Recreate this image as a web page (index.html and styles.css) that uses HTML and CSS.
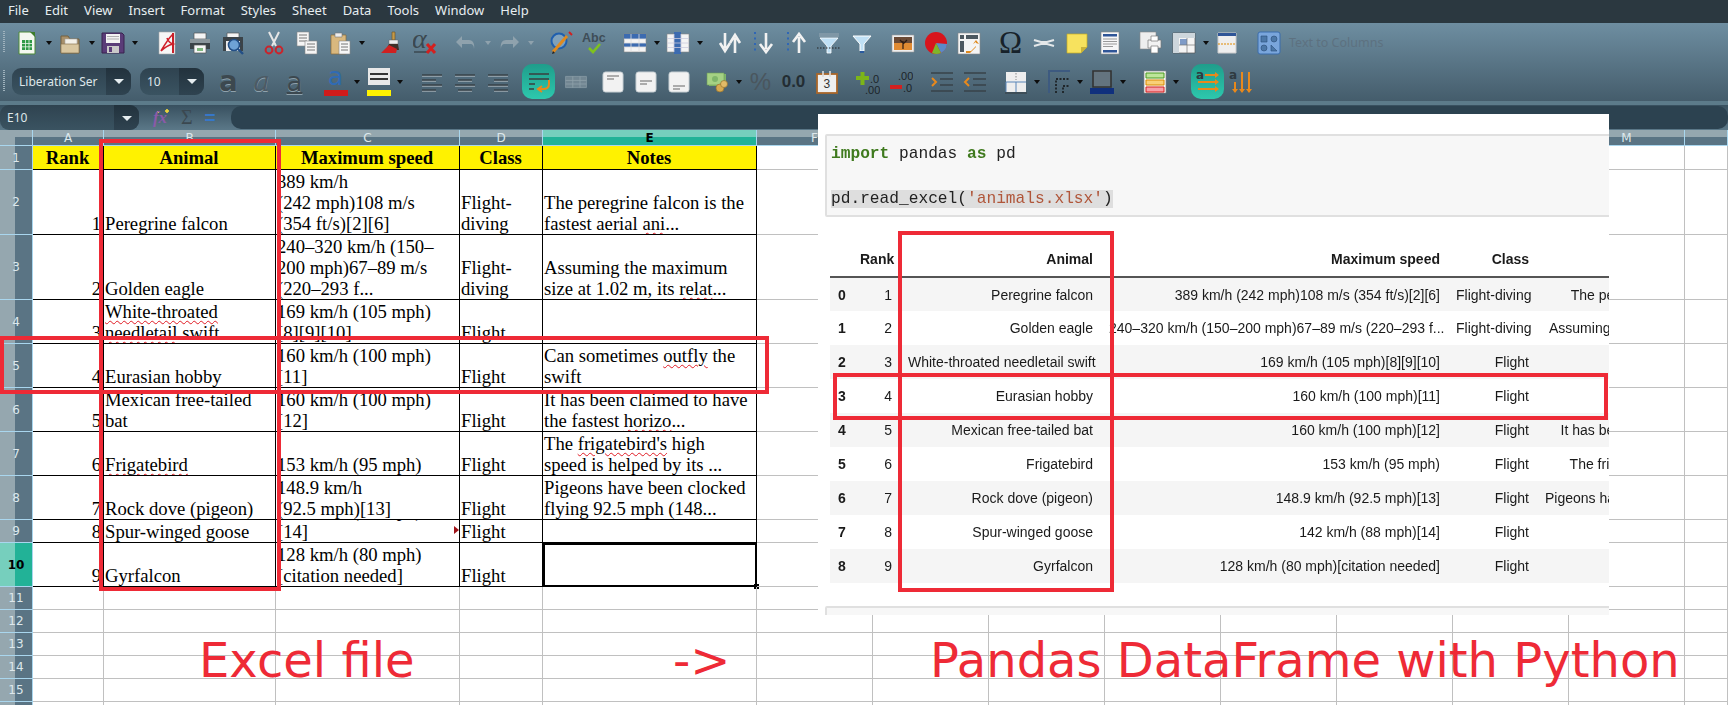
FILE: index.html
```html
<!DOCTYPE html>
<html lang="en">

<head>
  <meta charset="UTF-8">
  <title>Excel file to Pandas DataFrame</title>
  <link rel="stylesheet" href="styles.css">
</head>

<body>
  <div class="menubar">
    <span>File</span><span>Edit</span><span>View</span><span>Insert</span><span>Format</span><span>Styles</span><span>Sheet</span><span>Data</span><span>Tools</span><span>Window</span><span>Help</span>
  </div>

  <div class="toolbars">
    <!-- standard toolbar -->
    <div class="toolrow row-std">
      <div class="group">
        <span class="tool"><svg viewBox="0 0 24 24"><path d="M4 1h12l4 4v18H4z" fill="#f4f8f0" stroke="#4c8a38"/><path d="M15 1h5v5z" fill="#3d7d2c"/><path d="M7 9h10v10H7z" fill="#2f9a45"/><path d="M7 12.500h10M7 15.800h10M10.500 9v10M14 9v10" stroke="#e8f5e8" stroke-width=".8"/></svg></span><span class="drop"></span>
        <span class="tool"><svg viewBox="0 0 24 24"><path d="M3 5h7l2 3h9v14H3z" fill="#a8906a" stroke="#75613f"/><path d="M7 8h12v7H7z" fill="#f4f1e8" stroke="#aaa" stroke-width=".6"/><path d="M3 13h18v9H3z" fill="#d9c7a0" stroke="#8a7650" stroke-width=".7"/></svg></span><span class="drop"></span>
        <span class="tool"><svg viewBox="0 0 24 24"><path d="M1 2h20l2 2v18H1z" fill="#5a3c78" stroke="#38224f"/><path d="M5 3h14v9H5z" fill="#f2f2f2"/><path d="M6 5.500h12M6 8h12" stroke="#b0b0b0"/><path d="M6 15h12v7H6z" fill="#c9c9c9"/><path d="M8 16h3v5H8z" fill="#5a3c78"/></svg></span><span class="drop"></span>
      </div>
      <div class="group push-2">
        <span class="tool"><svg viewBox="0 0 24 24"><path d="M4 1h16v22H4z" fill="#f7f7f7" stroke="#aaa" stroke-width=".6"/><path d="M18 3c-5 5-8 10-12 17 4-4 8-6 12-7-3-1-5-3-6-6" fill="none" stroke="#d0202a" stroke-width="1.600"/><path d="M17 2h2v20h-2z" fill="#c9202a"/></svg></span>
        <span class="tool"><svg viewBox="0 0 24 24"><path d="M6 2h12v6H6z" fill="#f4f4f4" stroke="#555" stroke-width=".7"/><path d="M2 8h20v10H2z" fill="#3b4348"/><path d="M2 8h20v4H2z" fill="#8b969c"/><path d="M6 14h12v8H6z" fill="#f6f6f6" stroke="#555" stroke-width=".7"/><path d="M9 17h6v3H9z" fill="#7fb77e"/></svg></span>
        <span class="tool"><svg viewBox="0 0 24 24"><path d="M6 2h12v5H6z" fill="#f4f4f4" stroke="#555" stroke-width=".7"/><path d="M2 6h20v14H2z" fill="#3b4348"/><path d="M5 10h14v10H5z" fill="#eee"/><circle cx="13" cy="14" r="5.500" fill="#6ea2d6" stroke="#234f86" stroke-width="1.600"/><path d="M17 18l5 5" stroke="#234f86" stroke-width="2.400"/></svg></span>
      </div>
      <div class="group">
        <span class="tool"><svg viewBox="0 0 24 24"><path d="M7 1l7 14M17 1l-7 14" stroke="#e6e6e6" stroke-width="2"/><circle cx="7" cy="19" r="3.400" fill="none" stroke="#c9252c" stroke-width="2"/><circle cx="17" cy="19" r="3.400" fill="none" stroke="#c9252c" stroke-width="2"/></svg></span>
        <span class="tool"><svg viewBox="0 0 24 24"><path d="M2 1h12v14H2z" fill="#f5f5f5" stroke="#888" stroke-width=".6"/><path d="M4 4h8M4 7h8M4 10h8" stroke="#777"/><path d="M10 10h12v13H10z" fill="#f5f5f5" stroke="#888" stroke-width=".6"/><path d="M12 13h8M12 16h8M12 19h8" stroke="#777"/></svg></span>
        <span class="tool"><svg viewBox="0 0 24 24"><path d="M3 4h15v19H3z" fill="#d9b87e" stroke="#8a6c3a" stroke-width=".7"/><path d="M7 2h7v4H7z" fill="#eee" stroke="#777" stroke-width=".6"/><path d="M11 10h11v13H11z" fill="#f7f7f7" stroke="#888" stroke-width=".6"/><path d="M13 13h7M13 16h7M13 19h7" stroke="#777"/></svg></span><span class="drop"></span>
      </div>
      <div class="group">
        <span class="tool"><svg viewBox="0 0 24 24"><path d="M12 1h3v8h-3z" fill="#c49a4a" stroke="#6b4f1d" stroke-width=".6"/><path d="M9 9h9v4H9z" fill="#eee" stroke="#666" stroke-width=".5"/><path d="M9 13h9l1 6H6z" fill="#3f3028"/><path d="M1 22l8-8 8 4-1 4z" fill="#cf2020"/></svg></span>
        <span class="tool"><svg viewBox="0 0 24 24"><text x="-1" y="17" class="ico-italic">α</text><path d="M1 21h13" stroke="#3b4850" stroke-width="1.500"/><path d="M14 13l8 9M22 13l-8 9" stroke="#d4201f" stroke-width="3"/></svg></span>
      </div>
      <div class="group dim">
        <span class="tool"><svg viewBox="0 0 24 24"><path d="M8 5L2 11l6 6v-4h8c3 0 4 2 4 5 1-5-1-9-5-9H8z" fill="#8fa2ad"/></svg></span><span class="drop"></span>
        <span class="tool"><svg viewBox="0 0 24 24"><path d="M16 5l6 6-6 6v-4H8c-3 0-4 2-4 5-1-5 1-9 5-9h7z" fill="#8fa2ad"/></svg></span><span class="drop"></span>
      </div>
      <div class="group">
        <span class="tool"><svg viewBox="0 0 24 24"><circle cx="10" cy="10" r="7.500" fill="#9cc0e0" fill-opacity=".5" stroke="#1f5fae" stroke-width="2"/><path d="M4 21L18 5" stroke="#e08a1e" stroke-width="3"/><path d="M3 23l1-3 2 2z" fill="#222"/><path d="M20 1l3 3" stroke="#d02020" stroke-width="2"/></svg></span>
        <span class="tool"><svg viewBox="0 0 24 24"><text x="0" y="11" class="ico-abc">Abc</text><path d="M7 17l4 4 7-8" fill="none" stroke="#7fc21f" stroke-width="2.600"/></svg></span>
      </div>
      <div class="group">
        <span class="tool"><svg viewBox="0 0 24 24"><path d="M1 3h22v18H1z" fill="#f4f4f4" stroke="#888" stroke-width=".6"/><path d="M1 3h22v5H1zM1 12h22v4H1z" fill="#3c6bb0"/><path d="M1 8h22M1 12h22M1 16h22M8 3v18M16 3v18" stroke="#ddd" stroke-width=".8"/></svg></span><span class="drop"></span>
        <span class="tool"><svg viewBox="0 0 24 24"><path d="M1 3h22v18H1z" fill="#f4f4f4" stroke="#888" stroke-width=".6"/><path d="M8 1h7v22H8z" fill="#3c6bb0"/><path d="M1 7.500h22M1 12h22M1 16.500h22M8 3v18M15 3v18" stroke="#ccd" stroke-width=".8"/></svg></span><span class="drop"></span>
      </div>
      <div class="group">
        <span class="tool"><svg viewBox="0 0 24 24"><path d="M7 2v15M2 12l5 8 5-8" fill="none" stroke="#f2f2f2" stroke-width="2.600"/><path d="M17 22V7M12 12l5-8 5 8" fill="none" stroke="#f2f2f2" stroke-width="2.600"/></svg></span>
        <span class="tool"><svg viewBox="0 0 24 24"><path d="M4 1v22" stroke="#2f66b5" stroke-width="2" stroke-dasharray="2 3.500"/><path d="M15 2v16M9 13l6 8 6-8" fill="none" stroke="#f2f2f2" stroke-width="2.600"/></svg></span>
        <span class="tool"><svg viewBox="0 0 24 24"><path d="M4 1v22" stroke="#2f66b5" stroke-width="2" stroke-dasharray="2 3.500"/><path d="M15 22V6M9 11l6-8 6 8" fill="none" stroke="#f2f2f2" stroke-width="2.600"/></svg></span>
        <span class="tool"><svg viewBox="0 0 24 24"><path d="M2 2h20v4H2z" fill="#7f97a6"/><path d="M3 7h18l-7 8v7h-4v-7z" fill="#bfe0f5" stroke="#fff" stroke-width=".8"/><path d="M0 17h24" stroke="#222" stroke-dasharray="1.500 1.500"/></svg></span>
        <span class="tool"><svg viewBox="0 0 24 24"><path d="M3 5h18l-7 8v7h-4v-7z" fill="#bfe0f5" stroke="#fff"/><path d="M10 21h4" stroke="#2a5a9e" stroke-width="2"/></svg></span>
      </div>
      <div class="group">
        <span class="tool"><svg viewBox="0 0 24 24"><path d="M1 4h22v17H1z" fill="#eee" stroke="#999" stroke-width=".6"/><path d="M3 6h18v13H3z" fill="#e08a32"/><path d="M3 6h18v6H3z" fill="#6b4a35"/><path d="M12 18v-8M12 12l-3-3M12 13l4-4" stroke="#2c1c14" stroke-width="1.200"/></svg></span>
        <span class="tool"><svg viewBox="0 0 24 24"><circle cx="12" cy="12" r="11" fill="#d8141c"/><path d="M12 12l11 1a11 11 0 0 1-6 9z" fill="#5b8ac8"/><path d="M12 12l5 10a11 11 0 0 1-9 0z" fill="#7fb52a"/></svg></span>
        <span class="tool"><svg viewBox="0 0 24 24"><path d="M1 2h22v21H1z" fill="#f4f4f4" stroke="#888" stroke-width=".6"/><path d="M3 4h4v4H3zM9 4h12v4H9zM3 10h4v11H3z" fill="#4c5860"/><path d="M9 20h5l5-5v-4l-3 2 3-4 3 4-3-1v4l-6 6H9z" fill="#e08a1e"/></svg></span>
      </div>
      <div class="group">
        <span class="tool glyph-omega">Ω</span>
        <span class="tool"><svg viewBox="0 0 24 24"><path d="M2 9l7 2h6l7-2M2 15l7-2h6l7 2" fill="none" stroke="#e4e8ea" stroke-width="2.200"/></svg></span>
        <span class="tool"><svg viewBox="0 0 24 24"><path d="M2 3h20v13l-6 6H2z" fill="#f7e25e" stroke="#c7ad20" stroke-width=".7"/><path d="M16 22v-6h6z" fill="#c9b33a"/></svg></span>
        <span class="tool"><svg viewBox="0 0 24 24"><path d="M3 1h18v22H3z" fill="#f7f7f7" stroke="#888" stroke-width=".6"/><path d="M5 3h14v2.500H5zM5 19h14v2.500H5z" fill="#2f5597"/><path d="M5 8h14M5 10.500h14M5 13h14M5 15.500h10" stroke="#999"/></svg></span>
      </div>
      <div class="group">
        <span class="tool"><svg viewBox="0 0 24 24"><path d="M1 1h16v17H1z" fill="#eee" stroke="#888" stroke-width=".6"/><path d="M9 9h13v8H9z" fill="#f2f2f2" stroke="#777" stroke-width=".7"/><path d="M12 5h7v5h-7zM12 15h7v7h-7z" fill="#fff" stroke="#777" stroke-width=".7"/></svg></span>
        <span class="tool"><svg viewBox="0 0 24 24"><path d="M1 2h22v20H1z" fill="#f4f4f4" stroke="#555" stroke-width=".7"/><path d="M1 2h22v5H1zM1 2h6v20H1z" fill="#cdd6dc"/><path d="M8 8h7v6H8z" fill="#7f9bc7"/><path d="M7 14h16M15 7v15" stroke="#777" stroke-width=".7"/></svg></span><span class="drop"></span>
        <span class="tool"><svg viewBox="0 0 24 24"><path d="M3 2h18v20H3z" fill="#eee" stroke="#ccc"/><path d="M3 2h18v3H3z" fill="#2f5597"/><path d="M3 13h18" stroke="#e08a00" stroke-dasharray="2 1"/></svg></span>
      </div>
      <div class="group">
        <span class="tool"><svg viewBox="0 0 24 24"><rect x="1" y="1" width="22" height="22" rx="2" fill="#7aa6dc" stroke="#3a6cab"/><path d="M4 5h6v6H4z" fill="#4c78a8" stroke="#2a4d78" stroke-width=".6"/><circle cx="17" cy="8" r="3" fill="#4c78a8" stroke="#2a4d78" stroke-width=".6"/><circle cx="7" cy="17" r="3" fill="#4c78a8" stroke="#2a4d78" stroke-width=".6"/><path d="M14 20v-6l6 6z" fill="#4c78a8" stroke="#2a4d78" stroke-width=".6"/></svg></span>
        <span class="tool-label">Text to Columns</span>
      </div>
    </div>

    <!-- formatting toolbar -->
    <div class="toolrow row-fmt">
      <div class="combo combo-font"><span class="combo-text">Liberation Ser</span><span class="combo-btn"></span></div>
      <div class="combo combo-size"><span class="combo-text">10</span><span class="combo-btn"></span></div>
      <div class="group">
        <span class="tool glyph-a glyph-bold">a</span>
        <span class="tool glyph-a glyph-italic">a</span>
        <span class="tool glyph-a glyph-under">a</span>
      </div>
      <div class="group">
        <span class="tool"><span class="swatch-a">a</span><span class="swatch swatch-red"></span></span><span class="drop"></span>
        <span class="tool"><span class="swatch-lines"></span><span class="swatch swatch-yellow"></span></span><span class="drop"></span>
      </div>
      <div class="group push-2">
        <span class="tool"><svg viewBox="0 0 24 24"><path d="M2 5h20M2 10h14M2 15h20M2 20h14" stroke="#e8e8e8" stroke-width=".8" transform="translate(0 1)"/><path d="M2 5h20M2 10h14M2 15h20M2 20h14" stroke="#39434a" stroke-width="1.300"/></svg></span>
        <span class="tool"><svg viewBox="0 0 24 24"><path d="M2 5h20M5 10h14M2 15h20M5 20h14" stroke="#e8e8e8" stroke-width=".8" transform="translate(0 1)"/><path d="M2 5h20M5 10h14M2 15h20M5 20h14" stroke="#39434a" stroke-width="1.300"/></svg></span>
        <span class="tool"><svg viewBox="0 0 24 24"><path d="M2 5h20M8 10h14M2 15h20M8 20h14" stroke="#e8e8e8" stroke-width=".8" transform="translate(0 1)"/><path d="M2 5h20M8 10h14M2 15h20M8 20h14" stroke="#39434a" stroke-width="1.300"/></svg></span>
      </div>
      <div class="group group-tight">
        <span class="tool tool-on"><svg viewBox="0 0 24 24"><path d="M2 4h20M2 9h20M2 14h6M2 19h5" stroke="#3a3f3f" stroke-width="1.600"/><path d="M22 10v4c0 4-3 5-6 5h-4m3-3l-4 3 4 3" fill="none" stroke="#e8891c" stroke-width="2"/></svg></span>
        <span class="tool dim-icon"><svg viewBox="0 0 30 24"><path d="M2 5h26v14H2z" fill="#7b8e99" stroke="#94a6af"/><path d="M2 10h26M2 14.500h26M11 5v14M20 5v14" stroke="#a0b0b8"/></svg></span>
        <span class="group">
          <span class="tool"><svg viewBox="0 0 24 24"><rect x="2" y="2" width="20" height="20" rx="2.500" fill="#f2f2f2" stroke="#c8d0d4"/><path d="M6 6h12M6 9h7" stroke="#666" stroke-width="1.200"/></svg></span>
          <span class="tool"><svg viewBox="0 0 24 24"><rect x="2" y="2" width="20" height="20" rx="2.500" fill="#f2f2f2" stroke="#c8d0d4"/><path d="M6 11h12M6 14h7" stroke="#666" stroke-width="1.200"/></svg></span>
          <span class="tool"><svg viewBox="0 0 24 24"><rect x="2" y="2" width="20" height="20" rx="2.500" fill="#f2f2f2" stroke="#c8d0d4"/><path d="M6 16h12M6 19h7" stroke="#666" stroke-width="1.200"/></svg></span>
        </span>
      </div>
      <div class="group pull-2">
        <span class="tool"><svg viewBox="0 0 24 24"><path d="M3 4h17v12H3z" fill="#7fb56a"/><path d="M1 3h17v12H1z" fill="#a5d184" stroke="#6d9e58" stroke-width=".6"/><circle cx="9" cy="9" r="3" fill="#7fb56a"/><circle cx="14" cy="18" r="4" fill="#d7aa52" stroke="#96722c" stroke-width=".7"/><circle cx="18" cy="14" r="3.500" fill="#e2bb68" stroke="#96722c" stroke-width=".7"/></svg></span><span class="drop"></span>
        <span class="tool glyph-percent">%</span>
        <span class="tool glyph-num">0.0</span>
        <span class="tool"><svg viewBox="0 0 24 24"><rect x="2" y="4" width="20" height="19" fill="#efefef" stroke="#a9672a" stroke-width="1.800"/><path d="M8 1v6M15 1v6" stroke="#ddd" stroke-width="1.600"/><text x="8.500" y="18" class="ico-date">3</text></svg></span>
      </div>
      <div class="group">
        <span class="tool"><svg viewBox="0 0 24 24"><path d="M0 8h13M6.500 2v13" stroke="#7cb518" stroke-width="4"/><text x="14" y="13" class="ico-dec">.0</text><text x="9" y="24" class="ico-dec">.00</text></svg></span>
        <span class="tool"><svg viewBox="0 0 24 24"><text x="9" y="10" class="ico-dec">.00</text><path d="M1 17h12" stroke="#d4201f" stroke-width="4"/><text x="14" y="22" class="ico-dec">.0</text></svg></span>
      </div>
      <div class="group">
        <span class="tool"><svg viewBox="0 0 24 24"><path d="M1 3h22M10 9h13M10 15h13M1 21h22" stroke="#39434a" stroke-width="1.600"/><path d="M2 8l4 4-4 4" fill="none" stroke="#e8891c" stroke-width="2"/></svg></span>
        <span class="tool"><svg viewBox="0 0 24 24"><path d="M1 3h22M10 9h13M10 15h13M1 21h22" stroke="#39434a" stroke-width="1.600"/><path d="M6 8l-4 4 4 4" fill="none" stroke="#e8891c" stroke-width="2"/></svg></span>
      </div>
      <div class="group">
        <span class="tool"><svg viewBox="0 0 24 24"><path d="M2 2h20v20H2z" fill="#eee"/><path d="M12 3v7" stroke="#888" stroke-dasharray="1.500 1.500"/><path d="M2 22V12h20M12 12v10" fill="none" stroke="#5b86b8"/><path d="M1 23h22" stroke="#3b4850" stroke-width="1.500"/></svg></span><span class="drop"></span>
        <span class="tool"><svg viewBox="0 0 24 24"><path d="M2 23V1h21" fill="none" stroke="#3d5a80" stroke-width="2"/><path d="M9 23V9h14" fill="none" stroke="#111" stroke-width="1.400" stroke-dasharray="2 1.500"/><path d="M16 23v-7h7" fill="none" stroke="#111" stroke-width="1.400" stroke-dasharray="2 1.500"/></svg></span><span class="drop"></span>
        <span class="tool"><svg viewBox="0 0 24 24"><path d="M3 1h18v16H3z" fill="#64747f" stroke="#333" stroke-width="1.600"/><path d="M0 18h24v6H0z" fill="#10307d"/></svg></span><span class="drop"></span>
      </div>
      <div class="group push-2">
        <span class="tool"><svg viewBox="0 0 24 24"><path d="M1 1h22v22H1z" fill="#f4f4f4" stroke="#888" stroke-width=".6"/><path d="M3 3h18v5H3z" fill="#bde59a" stroke="#4a9a1e"/><path d="M3 10h18v5H3z" fill="#f8d078" stroke="#d98a00"/><path d="M3 17h18v5H3z" fill="#f7a0a8" stroke="#d4201f"/></svg></span><span class="drop"></span>
      </div>
      <div class="group push-2">
        <span class="tool tool-on"><svg viewBox="0 0 24 24"><text x="0" y="9" class="ico-small">a</text><path d="M9 5h12M2 12h20M2 19h20" stroke="#e8891c" stroke-width="2.200"/><path d="M19 2l4 3-4 3M19 9l4 3-4 3M19 16l4 3-4 3" fill="#e8891c"/></svg></span>
        <span class="tool"><svg viewBox="0 0 24 24"><text x="0" y="9" class="ico-small">a</text><path d="M6 12v10M13 2v20M20 2v20" stroke="#e8891c" stroke-width="2"/><path d="M3 19l3 4 3-4M10 19l3 4 3-4M17 19l3 4 3-4" fill="#e8891c"/></svg></span>
      </div>
    </div>
    <div class="toolbars-edge"></div>
  </div>

  <!-- formula bar -->
  <div class="formulabar">
    <div class="combo combo-name"><span class="combo-text">E10</span><span class="combo-btn"></span></div>
    <span class="fx-btn fx-wizard">fx</span>
    <span class="fx-btn fx-sum">Σ</span>
    <span class="fx-btn fx-equals">=</span>
    <div class="fx-input"></div>
  </div>

  <!-- spreadsheet -->
  <div class="sheet">
    <i class="corner"></i><b class="colhead">A</b><b class="colhead">B</b><b class="colhead">C</b><b class="colhead">D</b><b class="colhead colhead-on">E</b><b class="colhead">F</b><b class="colhead">G</b><b class="colhead">H</b><b class="colhead">I</b><b class="colhead">J</b><b class="colhead">K</b><b class="colhead">L</b><b class="colhead">M</b><b class="colhead"></b>

    <b class="rowhead">1</b>
    <div class="cell data head"><p>Rank</p></div><div class="cell data head"><p>Animal</p></div><div class="cell data head"><p>Maximum speed</p></div><div class="cell data head"><p>Class</p></div><div class="cell data head"><p>Notes</p></div>
    <i class="cell"></i><i class="cell"></i><i class="cell"></i><i class="cell"></i><i class="cell"></i><i class="cell"></i><i class="cell"></i><i class="cell"></i><i class="cell"></i>

    <b class="rowhead">2</b>
    <div class="cell data num"><p>1</p></div><div class="cell data"><p>Peregrine falcon</p></div><div class="cell data"><p>389 km/h<br>(242 mph)108 m/s<br>(354 ft/s)[2][6]</p></div><div class="cell data"><p>Flight-<br>diving</p></div><div class="cell data"><p>The peregrine falcon is the<br>fastest aerial <span class="typo">ani</span>...</p></div>
    <i class="cell"></i><i class="cell"></i><i class="cell"></i><i class="cell"></i><i class="cell"></i><i class="cell"></i><i class="cell"></i><i class="cell"></i><i class="cell"></i>

    <b class="rowhead">3</b>
    <div class="cell data num"><p>2</p></div><div class="cell data"><p>Golden eagle</p></div><div class="cell data"><p>240–320 km/h (150–<br>200 mph)67–89 m/s<br>(220–293 f...</p></div><div class="cell data"><p>Flight-<br>diving</p></div><div class="cell data"><p>Assuming the maximum<br>size at 1.02 m, its <span class="typo">relat</span>...</p></div>
    <i class="cell"></i><i class="cell"></i><i class="cell"></i><i class="cell"></i><i class="cell"></i><i class="cell"></i><i class="cell"></i><i class="cell"></i><i class="cell"></i>

    <b class="rowhead">4</b>
    <div class="cell data num"><p>3</p></div><div class="cell data"><p><span class="typo">White-throated</span><br><span class="typo">needletail</span> swift</p></div><div class="cell data"><p>169 km/h (105 mph)<br>[8][9][10]</p></div><div class="cell data"><p>Flight</p></div><div class="cell data"></div>
    <i class="cell"></i><i class="cell"></i><i class="cell"></i><i class="cell"></i><i class="cell"></i><i class="cell"></i><i class="cell"></i><i class="cell"></i><i class="cell"></i>

    <b class="rowhead">5</b>
    <div class="cell data num"><p>4</p></div><div class="cell data"><p>Eurasian hobby</p></div><div class="cell data"><p>160 km/h (100 mph)<br>[11]</p></div><div class="cell data"><p>Flight</p></div><div class="cell data"><p>Can sometimes <span class="typo">outfly</span> the<br>swift</p></div>
    <i class="cell"></i><i class="cell"></i><i class="cell"></i><i class="cell"></i><i class="cell"></i><i class="cell"></i><i class="cell"></i><i class="cell"></i><i class="cell"></i>

    <b class="rowhead">6</b>
    <div class="cell data num"><p>5</p></div><div class="cell data"><p>Mexican free-tailed<br>bat</p></div><div class="cell data"><p>160 km/h (100 mph)<br>[12]</p></div><div class="cell data"><p>Flight</p></div><div class="cell data"><p>It has been claimed to have<br>the fastest <span class="typo">horizo</span>...</p></div>
    <i class="cell"></i><i class="cell"></i><i class="cell"></i><i class="cell"></i><i class="cell"></i><i class="cell"></i><i class="cell"></i><i class="cell"></i><i class="cell"></i>

    <b class="rowhead">7</b>
    <div class="cell data num"><p>6</p></div><div class="cell data"><p><span class="typo">Frigatebird</span></p></div><div class="cell data"><p>153 km/h (95 mph)</p></div><div class="cell data"><p>Flight</p></div><div class="cell data"><p>The <span class="typo">frigatebird's</span> high<br>speed is helped by its ...</p></div>
    <i class="cell"></i><i class="cell"></i><i class="cell"></i><i class="cell"></i><i class="cell"></i><i class="cell"></i><i class="cell"></i><i class="cell"></i><i class="cell"></i>

    <b class="rowhead">8</b>
    <div class="cell data num"><p>7</p></div><div class="cell data"><p>Rock dove (pigeon)</p></div><div class="cell data"><p>148.9 km/h<br>(92.5 mph)[13]</p></div><div class="cell data"><p>Flight</p></div><div class="cell data"><p>Pigeons have been clocked<br>flying 92.5 mph (148...</p></div>
    <i class="cell"></i><i class="cell"></i><i class="cell"></i><i class="cell"></i><i class="cell"></i><i class="cell"></i><i class="cell"></i><i class="cell"></i><i class="cell"></i>

    <b class="rowhead">9</b>
    <div class="cell data num"><p>8</p></div><div class="cell data"><p>Spur-winged goose</p></div><div class="cell data has-more"><p>142 km/h (88 mph)<br>[14]</p></div><div class="cell data"><p>Flight</p></div><div class="cell data"></div>
    <i class="cell"></i><i class="cell"></i><i class="cell"></i><i class="cell"></i><i class="cell"></i><i class="cell"></i><i class="cell"></i><i class="cell"></i><i class="cell"></i>

    <b class="rowhead rowhead-on">10</b>
    <div class="cell data num"><p>9</p></div><div class="cell data"><p>Gyrfalcon</p></div><div class="cell data"><p>128 km/h (80 mph)<br>[citation needed]</p></div><div class="cell data"><p>Flight</p></div><div class="cell data active"></div>
    <i class="cell"></i><i class="cell"></i><i class="cell"></i><i class="cell"></i><i class="cell"></i><i class="cell"></i><i class="cell"></i><i class="cell"></i><i class="cell"></i>

    <b class="rowhead">11</b>
    <i class="cell"></i><i class="cell"></i><i class="cell"></i><i class="cell"></i><i class="cell"></i><i class="cell"></i><i class="cell"></i><i class="cell"></i><i class="cell"></i><i class="cell"></i><i class="cell"></i><i class="cell"></i><i class="cell"></i><i class="cell"></i>
    <b class="rowhead">12</b>
    <i class="cell"></i><i class="cell"></i><i class="cell"></i><i class="cell"></i><i class="cell"></i><i class="cell"></i><i class="cell"></i><i class="cell"></i><i class="cell"></i><i class="cell"></i><i class="cell"></i><i class="cell"></i><i class="cell"></i><i class="cell"></i>
    <b class="rowhead">13</b>
    <i class="cell"></i><i class="cell"></i><i class="cell"></i><i class="cell"></i><i class="cell"></i><i class="cell"></i><i class="cell"></i><i class="cell"></i><i class="cell"></i><i class="cell"></i><i class="cell"></i><i class="cell"></i><i class="cell"></i><i class="cell"></i>
    <b class="rowhead">14</b>
    <i class="cell"></i><i class="cell"></i><i class="cell"></i><i class="cell"></i><i class="cell"></i><i class="cell"></i><i class="cell"></i><i class="cell"></i><i class="cell"></i><i class="cell"></i><i class="cell"></i><i class="cell"></i><i class="cell"></i><i class="cell"></i>
    <b class="rowhead">15</b>
    <i class="cell"></i><i class="cell"></i><i class="cell"></i><i class="cell"></i><i class="cell"></i><i class="cell"></i><i class="cell"></i><i class="cell"></i><i class="cell"></i><i class="cell"></i><i class="cell"></i><i class="cell"></i><i class="cell"></i><i class="cell"></i>
    <b class="rowhead"></b>
    <i class="cell"></i><i class="cell"></i><i class="cell"></i><i class="cell"></i><i class="cell"></i><i class="cell"></i><i class="cell"></i><i class="cell"></i><i class="cell"></i><i class="cell"></i><i class="cell"></i><i class="cell"></i><i class="cell"></i><i class="cell"></i>
  </div>

  <!-- notebook screenshot pasted over the sheet -->
  <div class="notebook">
    <div class="nb-cell">
      <pre><span class="kw">import</span> pandas <span class="kw">as</span> pd

<span class="hl">pd.read_excel(<span class="str">'animals.xlsx'</span>)</span></pre>
    </div>
    <table class="frame">
      <colgroup><col class="col-idx"><col class="col-rank"><col class="col-animal"><col class="col-speed"><col class="col-class"><col class="col-notes"></colgroup>
      <thead>
        <tr><th></th><th>Rank</th><th>Animal</th><th>Maximum speed</th><th>Class</th><th>Notes</th></tr>
      </thead>
      <tbody>
        <tr><th>0</th><td>1</td><td>Peregrine falcon</td><td>389 km/h (242 mph)108 m/s (354 ft/s)[2][6]</td><td>Flight-diving</td><td>The peregrine falcon is the fastest aerial ani...</td></tr>
        <tr><th>1</th><td>2</td><td>Golden eagle</td><td>240–320 km/h (150–200 mph)67–89 m/s (220–293 f...</td><td>Flight-diving</td><td>Assuming the maximum size at 1.02 m, its relat...</td></tr>
        <tr><th>2</th><td>3</td><td>White-throated needletail swift</td><td>169 km/h (105 mph)[8][9][10]</td><td>Flight</td><td></td></tr>
        <tr><th>3</th><td>4</td><td>Eurasian hobby</td><td>160 km/h (100 mph)[11]</td><td>Flight</td><td></td></tr>
        <tr><th>4</th><td>5</td><td>Mexican free-tailed bat</td><td>160 km/h (100 mph)[12]</td><td>Flight</td><td>It has been claimed to have the fastest horizo...</td></tr>
        <tr><th>5</th><td>6</td><td>Frigatebird</td><td>153 km/h (95 mph)</td><td>Flight</td><td>The frigatebird's high speed is helped by its ...</td></tr>
        <tr><th>6</th><td>7</td><td>Rock dove (pigeon)</td><td>148.9 km/h (92.5 mph)[13]</td><td>Flight</td><td>Pigeons have been clocked flying 92.5 mph (148...</td></tr>
        <tr><th>7</th><td>8</td><td>Spur-winged goose</td><td>142 km/h (88 mph)[14]</td><td>Flight</td><td></td></tr>
        <tr><th>8</th><td>9</td><td>Gyrfalcon</td><td>128 km/h (80 mph)[citation needed]</td><td>Flight</td><td></td></tr>
      </tbody>
    </table>
    <div class="nb-cell nb-next"></div>
  </div>

  <!-- red annotations -->
  <div class="mark mark-col-left"></div>
  <div class="mark mark-row-left"></div>
  <div class="mark mark-col-right"></div>
  <div class="mark mark-row-right"></div>
  <div class="caption caption-excel">Excel file</div>
  <div class="caption caption-arrow">-&gt;</div>
  <div class="caption caption-pandas">Pandas DataFrame with Python</div>
</body>

</html>
```

FILE: styles.css
```css
* {
  box-sizing: border-box;
}

html,
body {
  margin: 0;
  height: 705px;
  overflow: hidden;
}

body {
  position: relative;
  width: 1728px;
  background-color: #fff;
  font-family: "Noto Sans", sans-serif;
}

svg {
  display: block;
  width: 24px;
  height: 24px;
}

/* menu */
.menubar {
  display: flex;
  gap: 16px;
  height: 23px;
  padding-left: 8px;
  background-color: #2b3840;
  color: #e6edf0;
  font-size: 13px;
  line-height: 20px;
}

/* toolbars */
.toolbars {
  position: relative;
  height: 82px;
  background: linear-gradient(#6e8ea1, #445c6b 96%);
}

.toolbars-edge {
  height: 4px;
  background-color: #5c7b8a;
}

.toolrow {
  position: relative;
  display: flex;
  align-items: center;
  gap: 8.5px;
  height: 39px;
}

/* drag handle at the left of each toolbar */
.toolrow::before {
  content: '';
  position: absolute;
  left: 3px;
  top: 8px;
  width: 2px;
  height: 22px;
  background: repeating-linear-gradient(#9fb2bd 0 1px, transparent 1px 2px);
}

.row-std {
  padding-left: 10.5px;
}

.row-fmt {
  padding-left: 12px;
  gap: 8px;
}

.group {
  display: flex;
  align-items: center;
}

.group-tight {
  gap: 4px;
}

.push-2 {
  margin-left: 2px;
}

.pull-2 {
  margin-left: -2px;
}

.tool {
  position: relative;
  display: flex;
  align-items: center;
  justify-content: center;
  width: 33px;
  height: 35px;
}

.drop {
  width: 0;
  height: 0;
  margin: 0 2px;
  border: 3px solid transparent;
  border-top: 4px solid #0d0d0d;
  border-bottom: 0;
}

.dim .drop {
  border-top-color: #8fa2ad;
}

.dim-icon {
  opacity: .8;
}

.tool-on {
  border-radius: 10px;
  background: linear-gradient(#1f9d8b, #2dc8ad);
}

.tool-label {
  margin-left: 4px;
  color: #5d7180;
  font-size: 12.5px;
  white-space: nowrap;
}

.combo {
  display: flex;
  align-items: center;
  height: 27px;
  border-radius: 9px;
  background: linear-gradient(#2f4350, #3a5361);
  color: #dfe7ea;
  font-size: 12px;
  overflow: hidden;
}

.combo-text {
  flex: 1;
  padding-left: 7px;
  white-space: nowrap;
}

.combo-btn {
  position: relative;
  width: 25px;
  height: 100%;
  background: linear-gradient(#22323d, #2f4350);
}

.combo-btn::after {
  content: '';
  position: absolute;
  left: 8px;
  top: 11px;
  border: 5px solid transparent;
  border-top: 5px solid #e6edf0;
  border-bottom: 0;
}

.combo-font {
  width: 119px;
  margin-right: 1px;
}

.combo-size {
  width: 64px;
}

/* letter buttons */
.glyph-a {
  color: #3c484f;
  font-family: "DejaVu Sans", sans-serif;
  font-size: 28px;
  line-height: 30px;
  text-shadow: 0 1px 0 #8fa2ad;
}

.glyph-bold {
  font-weight: bold;
}

.glyph-italic {
  font-family: "DejaVu Serif", serif;
  font-style: italic;
  color: #4c5a64;
}

.glyph-under {
  font-size: 26px;
  text-decoration: underline;
  text-underline-offset: 1px;
}

.glyph-omega {
  color: #17222a;
  font-family: "Liberation Serif", serif;
  font-size: 31px;
}

.glyph-percent {
  color: #4a565e;
  font-family: "Liberation Sans", sans-serif;
  font-size: 24px;
}

.glyph-num {
  color: #232d33;
  font-family: "Liberation Sans", sans-serif;
  font-size: 17px;
  font-weight: bold;
}

.swatch-a {
  margin-top: -10px;
  color: #2f6bb5;
  font-family: "DejaVu Sans", sans-serif;
  font-size: 25px;
  line-height: 24px;
}

.swatch {
  position: absolute;
  left: 5px;
  bottom: 3px;
  width: 24px;
  height: 6px;
}

.swatch-red {
  background-color: #d01b1b;
}

.swatch-yellow {
  background-color: #fff200;
}

.swatch-lines {
  width: 22px;
  height: 17px;
  margin-top: -11px;
  border: 2px solid #e8e8e8;
  background: linear-gradient(#e8e8e8 3px, #333 3px, #333 5px, #e8e8e8 5px, #e8e8e8 8px, #333 8px, #333 10px, #e8e8e8 10px);
}

.ico-italic {
  fill: #3b4850;
  font: italic 28px "Liberation Serif", serif;
}

.ico-abc {
  fill: #3e4d57;
  font: bold 12.5px "Liberation Sans", sans-serif;
}

.ico-date {
  fill: #333;
  font: 12px "Liberation Sans", sans-serif;
}

.ico-dec {
  fill: #1c2429;
  font: 11px "Liberation Sans", sans-serif;
}

.ico-small {
  fill: #2f3a40;
  font: bold 12px "DejaVu Sans", sans-serif;
}

/* formula bar */
.formulabar {
  display: flex;
  align-items: center;
  height: 25px;
  background: linear-gradient(#38505f, #5b7888);
}

.combo-name {
  flex: none;
  width: 139px;
  height: 25px;
}

.fx-btn {
  flex: none;
  text-align: center;
}

.fx-wizard {
  width: 42px;
  color: #8a5aa8;
  font: italic bold 17px "Liberation Serif", serif;
  background: radial-gradient(circle at 28px 3px, #e8d23a 1.5px, transparent 2px), radial-gradient(circle at 19px 4px, #e8d23a 1px, transparent 1.500px);
}

.fx-sum {
  width: 8px;
  color: #3b4850;
  font: 20px "Liberation Serif", serif;
}

.fx-equals {
  width: 42px;
  color: #3677c9;
  font: bold 19px "Liberation Sans", sans-serif;
}

.fx-input {
  flex: 1;
  height: 23px;
  border-radius: 10px;
  background-color: #2c4250;
}

/* sheet */
.sheet {
  display: grid;
  grid-template-columns: 33px 71px 172px 184px 83px 214px repeat(8, 116px) 1fr;
  grid-template-rows: 16px 24px 65px 65px 44px 44px 44px 44px 44px 23px 44px 23px 23px 23px 23px 23px 23px;
}

.corner,
.colhead {
  background: linear-gradient(#95a7af 7px, #5a7484 7px);
  border-right: 1px solid #a9d6ee;
  border-bottom: 1px solid #a9d6ee;
}

.corner {
  background: linear-gradient(90deg, #95a7af 15px, transparent 15px), linear-gradient(#95a7af 7px, #5a7484 7px);
}

.colhead {
  color: #dde8ec;
  font: 12px/16px "DejaVu Sans", sans-serif;
  text-align: center;
}

.colhead-on {
  background: linear-gradient(#76cfbd 7px, #22b297 7px);
  color: #000;
  font-weight: bold;
}

.rowhead {
  display: flex;
  align-items: center;
  justify-content: center;
  background: linear-gradient(90deg, #95a7af 15px, #5a7484 15px);
  border-right: 1px solid #a9d6ee;
  border-bottom: 1px solid #a9d6ee;
  color: #dde8ec;
  font: 12px "DejaVu Sans", sans-serif;
}

.rowhead-on {
  background: linear-gradient(90deg, #76cfbd 15px, #22b297 15px);
  color: #000;
  font-weight: bold;
}

.cell {
  position: relative;
  display: flex;
  align-items: flex-end;
  padding: 0 2px 0 1px;
  border-right: 1px solid #c0c0c0;
  border-bottom: 1px solid #c0c0c0;
  color: #000;
  font: 18.67px/21px "Liberation Serif", serif;
  overflow: hidden;
}

.cell p {
  margin: 0;
  flex: none;
  white-space: nowrap;
}

.data {
  border-color: #000;
}

.head {
  align-items: center;
  justify-content: center;
  background-color: #fff200;
  font-weight: bold;
}

.num {
  justify-content: flex-end;
}

.typo {
  text-decoration: underline wavy #e01b24 1px;
  text-underline-offset: 2px;
}

.has-more::after {
  content: '';
  position: absolute;
  right: 0;
  top: 6px;
  border: 4px solid transparent;
  border-left: 5px solid #a0141a;
  border-right: 0;
}

.active {
  overflow: visible;
  box-shadow: inset 2px 2px 0 #000, inset -1px -1px 0 #000;
}

.active::after {
  content: '';
  position: absolute;
  right: -3px;
  bottom: -3px;
  width: 5px;
  height: 5px;
  background-color: #000;
}

/* notebook */
.notebook {
  position: absolute;
  left: 818px;
  top: 114px;
  width: 791px;
  height: 501px;
  padding: 20px 0 0 7px;
  background-color: #fff;
  overflow: hidden;
  filter: blur(.5px);
}

.nb-cell {
  width: 800px;
  height: 83px;
  padding: 7px 4px;
  border: 2px solid #e0e0e0;
  border-radius: 2px;
  background-color: #f7f7f7;
}

.nb-cell pre {
  margin: 0;
  color: #222;
  font: 16.2px/22.5px "Liberation Mono", monospace;
}

.kw {
  color: #3f7a1e;
  font-weight: bold;
}

.str {
  color: #b0563a;
}

.hl {
  background-color: #dedede;
}

.frame {
  width: 1032px;
  margin: 24px 0 0 5px;
  border-collapse: collapse;
  table-layout: fixed;
  color: #1a1a1a;
  font: 14px/18px "Liberation Sans", sans-serif;
}

.frame th,
.frame td {
  height: 34px;
  padding: 0 8px;
  text-align: right;
  white-space: nowrap;
  overflow: visible;
}

.frame thead th {
  height: 36px;
  border-bottom: 2px solid #555;
}

.frame tbody tr:nth-child(odd) {
  background-color: #f5f5f5;
}

.col-idx {
  width: 22px;
}

.col-rank {
  width: 48px;
}

.col-animal {
  width: 201px;
}

.col-speed {
  width: 347px;
}

.col-class {
  width: 89px;
}

.col-notes {
  width: 325px;
}

.nb-next {
  margin-top: 23px;
}

/* red annotations */
.mark {
  position: absolute;
  border: 4px solid #ee2a36;
}

.mark-col-left {
  left: 99px;
  top: 139px;
  width: 182px;
  height: 452px;
}

.mark-row-left {
  left: 0;
  top: 336px;
  width: 769px;
  height: 58px;
}

.mark-col-right {
  left: 898px;
  top: 231px;
  width: 216px;
  height: 361px;
}

.mark-row-right {
  left: 833px;
  top: 373px;
  width: 775px;
  height: 47px;
}

.caption {
  position: absolute;
  top: 632px;
  color: #ee2a36;
  font-family: "DejaVu Sans", sans-serif;
  font-size: 48px;
  white-space: nowrap;
}

.caption-excel {
  left: 199px;
}

.caption-arrow {
  left: 673px;
}

.caption-pandas {
  left: 930px;
}
```
